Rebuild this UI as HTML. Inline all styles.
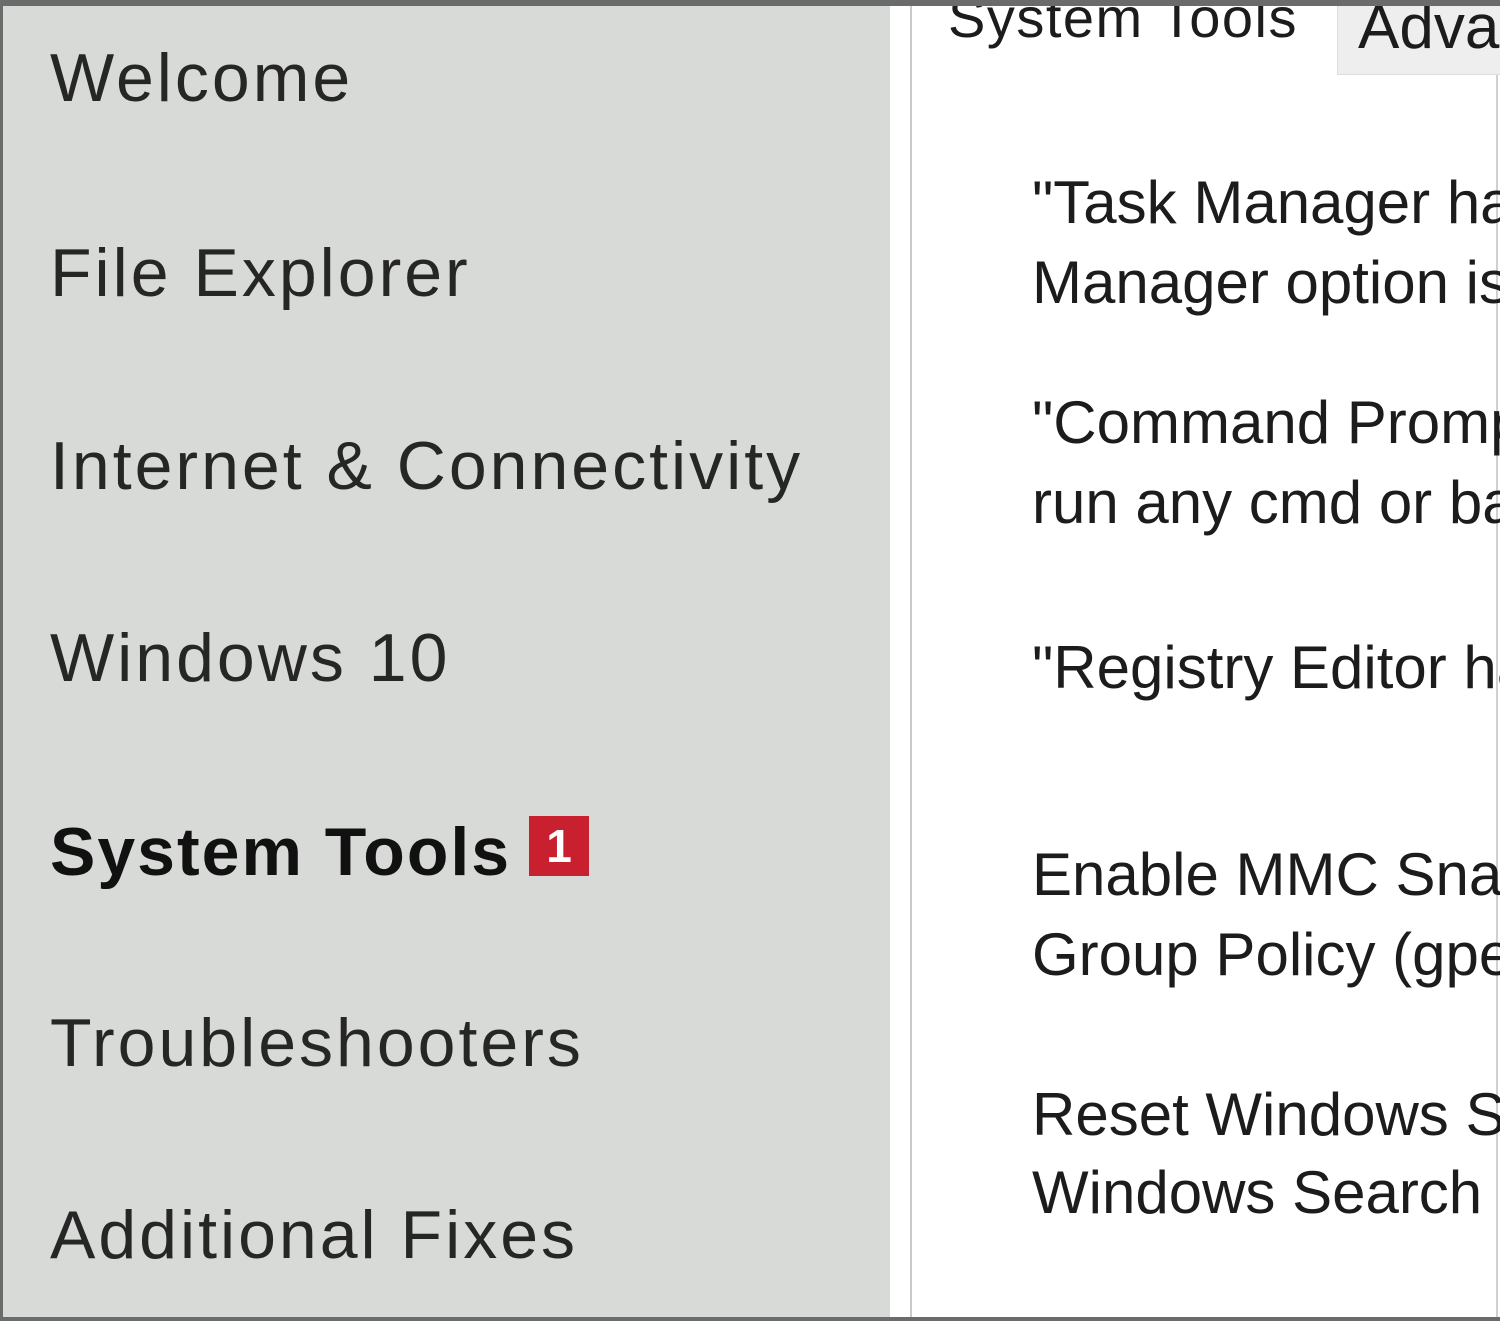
<!DOCTYPE html>
<html><head><style>
html,body{margin:0;padding:0;}
body{width:1500px;height:1321px;overflow:hidden;position:relative;background:#fff;font-family:"Liberation Sans",sans-serif;}
#clip{position:absolute;left:0;top:0;width:1500px;height:1321px;overflow:hidden;}
#top{position:absolute;left:0;top:0;width:1500px;height:6px;background:#6a6c6c;}
#lb{position:absolute;left:0;top:0;width:3px;height:1321px;background:#6a6c6c;}
#bb{position:absolute;left:0;top:1317px;width:1500px;height:4px;background:#6a6c6c;}
#side{position:absolute;left:3px;top:6px;width:887px;height:1311px;background:#d8dad7;}
#vl{position:absolute;left:910px;top:6px;width:2px;height:1311px;background:#c9cbc9;}
#rb{position:absolute;left:1496px;top:6px;width:2px;height:1311px;background:#cfd0cf;}
.m{position:absolute;left:50px;font-size:68px;color:#262626;white-space:nowrap;line-height:1;letter-spacing:3px;}
.b{font-weight:bold;color:#111;letter-spacing:2px;}
.badge{display:inline-block;background:#c8202e;color:#fff;font-size:46px;font-weight:bold;width:60px;height:60px;line-height:60px;text-align:center;vertical-align:top;margin-top:-2px;margin-left:18px;letter-spacing:0;}
.t{position:absolute;left:1032px;font-size:60px;color:#1c1c1c;white-space:nowrap;line-height:1;}
#tab2{position:absolute;left:1337px;top:6px;width:163px;height:68px;background:#eeeeee;border-left:1px solid #ddd;border-bottom:1px solid #ddd;}
</style></head><body>
<div id="clip">
<div id="side"></div>
<div id="vl"></div>
<div id="rb"></div>
<div id="tab2"></div>
<div class="t" style="left:948px;top:-10px;font-size:56px;letter-spacing:1.5px;">System Tools</div>
<div class="t" style="left:1358px;top:-3px;font-size:62px;">Advanced</div>
<div id="top"></div><div id="lb"></div><div id="bb"></div>

<div class="m" style="top:44px">Welcome</div>
<div class="m" style="top:239px">File Explorer</div>
<div class="m" style="top:432px">Internet &amp; Connectivity</div>
<div class="m" style="top:624px">Windows 10</div>
<div class="m b" style="top:818px">System Tools<span class="badge">1</span></div>
<div class="m" style="top:1009px">Troubleshooters</div>
<div class="m" style="top:1201px">Additional Fixes</div>

<div class="t" style="top:173px">"Task Manager has been disabled"</div>
<div class="t" style="top:253px">Manager option is missing</div>
<div class="t" style="top:393px">"Command Prompt has been disabled"</div>
<div class="t" style="top:473px">run any cmd or bat file</div>
<div class="t" style="top:638px">"Registry Editor has been disabled"</div>
<div class="t" style="top:845px">Enable MMC Snap-ins</div>
<div class="t" style="top:925px">Group Policy (gpedit.msc)</div>
<div class="t" style="top:1085px">Reset Windows Search</div>
<div class="t" style="top:1163px">Windows Search not working</div>
</div>
</body></html>
